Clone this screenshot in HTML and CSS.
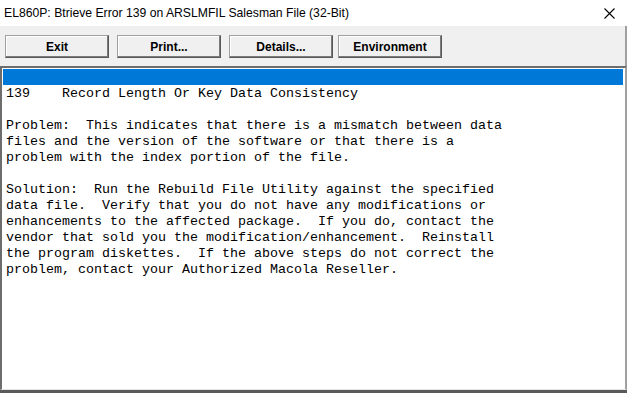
FILE: index.html
```html
<!DOCTYPE html>
<html lang="en">
<head>
    <meta charset="UTF-8">
    <title>EL860P: Btrieve Error 139</title>
    <link rel="stylesheet" href="styles.css">
</head>
<body>
    <div class="window">
        <div class="titlebar">
            <span class="title">EL860P: Btrieve Error 139 on ARSLMFIL Salesman File (32-Bit)</span>
            <svg class="close" width="11" height="11" viewBox="0 0 11 11">
                <path d="M0.5 0.5 L10.5 10.5 M10.5 0.5 L0.5 10.5" stroke="#000" stroke-width="1.1" fill="none"/>
            </svg>
        </div>

        <div class="toolbar">
            <button class="btn">Exit</button>
            <button class="btn">Print...</button>
            <button class="btn">Details...</button>
            <button class="btn btn-env">Environment</button>
        </div>

        <div class="panel">
            <div class="line selected"></div>
<pre class="message">139    Record Length Or Key Data Consistency

Problem:  This indicates that there is a mismatch between data
files and the version of the software or that there is a
problem with the index portion of the file.

Solution:  Run the Rebuild File Utility against the specified
data file.  Verify that you do not have any modifications or
enhancements to the affected package.  If you do, contact the
vendor that sold you the modification/enhancement.  Reinstall
the program diskettes.  If the above steps do not correct the
problem, contact your Authorized Macola Reseller.</pre>
        </div>
        <div class="taskbar"></div>
    </div>
</body>
</html>
```

FILE: styles.css
```css
* {
    margin: 0;
    padding: 0;
    box-sizing: border-box;
}

body {
    width: 627px;
    height: 393px;
    overflow: hidden;
    background-color: #f0f0f0;
    font-family: 'Liberation Sans', Arial, sans-serif;
}

.window {
    display: flex;
    flex-direction: column;
    height: 393px;
}

.titlebar {
    height: 26px;
    background-color: #fff;
    display: flex;
    align-items: center;
    padding-left: 4px;
    padding-right: 12px;
    font-size: 12.2px;
    color: #000;
}

.title {
    flex: 1;
}

.close {
    display: block;
    margin-top: 1px;
}

.toolbar {
    height: 40px;
    display: flex;
    align-items: flex-start;
    padding: 9px 0 0 5px;
    gap: 8px;
    background-color: #f0f0f0;
    border-right: 2px solid #a0a0a0;
}

.btn {
    width: 104px;
    height: 23px;
    background-color: #f0f0f0;
    font-family: 'Liberation Sans', Arial, sans-serif;
    font-size: 12px;
    font-weight: bold;
    color: #000;
    border: 1px solid;
    border-color: #a0a0a0 #5a5a5a #5a5a5a #a0a0a0;
    box-shadow: inset -1px -1px #7a7a7a, inset 1px 1px #fff;
}

.btn-env {
    margin-left: -3px;
}

.panel {
    flex: 1;
    background-color: #fff;
    border-top: 2px solid #6d6d6d;
    border-left: 2px solid #6d6d6d;
    border-right: 2px solid #a0a0a0;
    border-bottom: 1px solid #e3e3e3;
    padding: 1px 2px 0 1px;
}

.line {
    height: 16px;
}

.selected {
    background-color: #0078d7;
}

.message {
    font-family: 'Liberation Mono', 'Courier New', monospace;
    font-size: 13.333px;
    line-height: 16px;
    color: #000;
    padding: 1px 0 0 3px;
}

.taskbar {
    height: 3px;
    background-color: #5a5a5a;
}
```
